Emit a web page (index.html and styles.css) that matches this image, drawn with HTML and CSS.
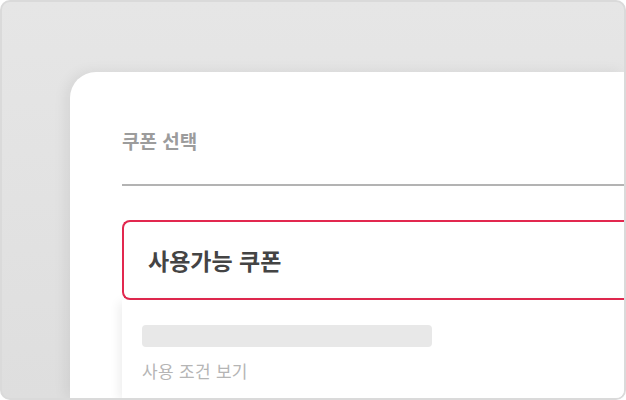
FILE: index.html
```html
<!DOCTYPE html>
<html lang="ko">
<head>
<meta charset="utf-8">
<link rel="stylesheet" href="styles.css">
</head>
<body>
<div class="frame">
  <div class="card">
    <div class="title">쿠폰 선택</div>
    <div class="rule"></div>
    <div class="select">사용가능 쿠폰</div>
    <div class="panel">
      <div class="bar"></div>
      <div class="terms">사용 조건 보기</div>
    </div>
  </div>
</div>
</body>
</html>
```
FILE: styles.css
```css
html, body {
  margin: 0;
  padding: 0;
  background: #ffffff;
}
.frame {
  width: 626px;
  height: 400px;
  box-sizing: border-box;
  border: 2px solid #dadada;
  border-radius: 10px;
  overflow: hidden;
  background: linear-gradient(180deg, #e6e6e6 0%, #dedede 100%);
  padding: 70px 0 0 68px;
  font-family: "Noto Sans CJK KR", "Noto Sans", sans-serif;
}
.card {
  height: 100%;
  background: #ffffff;
  border-top-left-radius: 26px;
  box-shadow: -4px 0 14px rgba(0, 0, 0, 0.07);
  padding: 56px 0 0 52px;
  box-sizing: border-box;
  display: flex;
  flex-direction: column;
}
.title {
  font-size: 19px;
  font-weight: 700;
  line-height: 26px;
  color: #9c9c9c;
}
.rule {
  height: 2px;
  background: #b3b3b3;
  margin-top: 30px;
}
.select {
  margin-top: 34px;
  height: 80px;
  box-sizing: border-box;
  border: 2px solid #e2284f;
  border-right: none;
  border-radius: 8px 0 0 8px;
  padding-left: 24px;
  display: flex;
  align-items: center;
  font-size: 23px;
  font-weight: 700;
  color: #444444;
}
.panel {
  flex: 1;
  background: #ffffff;
  box-shadow: -3px 2px 10px rgba(0, 0, 0, 0.07);
  padding: 25px 0 0 20px;
  display: flex;
  flex-direction: column;
}
.bar {
  width: 290px;
  height: 22px;
  border-radius: 4px;
  background: #e8e8e8;
}
.terms {
  margin-top: 11px;
  font-size: 17px;
  line-height: 26px;
  color: #b5b5b5;
  letter-spacing: 0.3px;
}
```
